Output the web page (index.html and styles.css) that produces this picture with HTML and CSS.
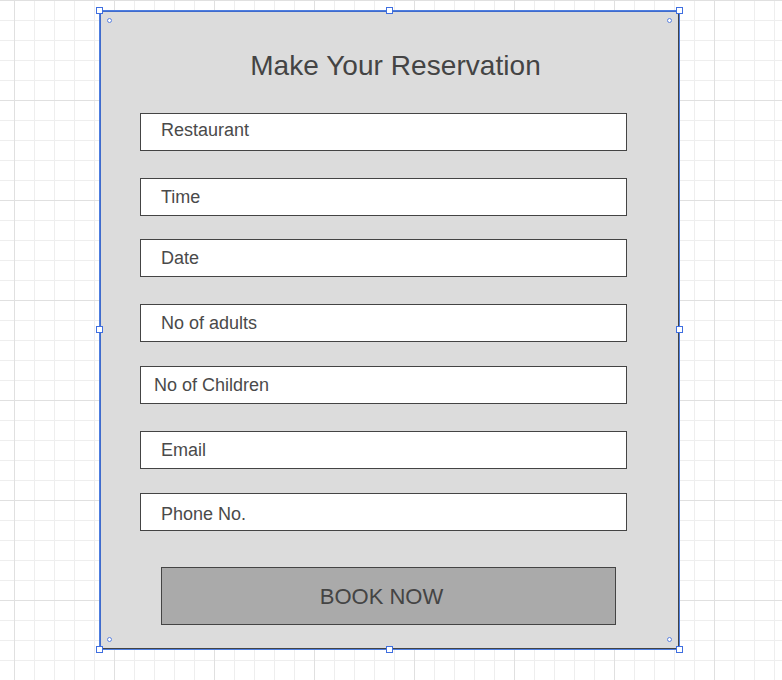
FILE: index.html
```html
<!DOCTYPE html>
<html lang="en">
<head>
<meta charset="utf-8">
<title>Make Your Reservation</title>
<link rel="stylesheet" href="styles.css">
</head>
<body>
<div class="stage">
  <div class="selection">
    <form class="panel">
      <h1 class="title">Make Your Reservation</h1>
      <div class="field field-first field-high">Restaurant</div>
      <div class="field gap-27">Time</div>
      <div class="field gap-23">Date</div>
      <div class="field gap-27">No of adults</div>
      <div class="field gap-24 field-tight">No of Children</div>
      <div class="field gap-27">Email</div>
      <div class="field gap-24 field-low">Phone No.</div>
      <div class="button">BOOK NOW</div>
      <span class="dot dot-tl"></span>
      <span class="dot dot-tr"></span>
      <span class="dot dot-bl"></span>
      <span class="dot dot-br"></span>
    </form>
    <span class="handle h-tl"></span>
    <span class="handle h-tm"></span>
    <span class="handle h-tr"></span>
    <span class="handle h-ml"></span>
    <span class="handle h-mr"></span>
    <span class="handle h-bl"></span>
    <span class="handle h-bm"></span>
    <span class="handle h-br"></span>
  </div>
</div>
</body>
</html>
```
FILE: styles.css
```css
html, body {
  margin: 0;
  padding: 0;
}
body {
  width: 782px;
  height: 680px;
  overflow: hidden;
  font-family: "Liberation Sans", Arial, sans-serif;
  background-color: #ffffff;
  background-image:
    linear-gradient(to right, #e0e0e0 1px, transparent 1px),
    linear-gradient(to bottom, #e0e0e0 1px, transparent 1px),
    linear-gradient(to right, #eeeeee 1px, transparent 1px),
    linear-gradient(to bottom, #eeeeee 1px, transparent 1px);
  background-size: 100px 100px, 100px 100px, 20px 20px, 20px 20px;
  background-position: 14px 0, 0 0, 14px 0, 0 0;
}
.stage {
  padding: 10px 0 0 99px;
}
.selection {
  position: relative;
  box-sizing: border-box;
  width: 581px;
  height: 640px;
  border: 1px solid #4d7de0;
}
.panel {
  position: relative;
  box-sizing: border-box;
  width: 579px;
  height: 638px;
  margin: 0;
  background: #dcdcdc;
  border-top: 1px solid #3f6bcc;
  border-left: 1px solid #3f6bcc;
  border-right: 1px solid #444444;
  border-bottom: 1px solid #444444;
  display: flex;
  flex-direction: column;
  align-items: flex-start;
}
.title {
  margin: 38px 0 0 0;
  width: 100%;
  box-sizing: border-box;
  padding-left: 12px;
  text-align: center;
  font-size: 28px;
  letter-spacing: 0.05px;
  line-height: 32px;
  font-weight: normal;
  color: #444444;
}
.field {
  box-sizing: border-box;
  width: 487px;
  height: 38px;
  margin-left: 39px;
  border: 1px solid #444444;
  background: #ffffff;
  padding: 8px 0 0 20px;
  font-size: 18px;
  line-height: 20px;
  color: #4a4a4a;
}
.field-first { margin-top: 31px; }
.field-high { padding-top: 6px; }
.field-low { padding-top: 10px; }
.field-tight { padding-left: 13px; }
.gap-23 { margin-top: 23px; }
.gap-24 { margin-top: 24px; }
.gap-27 { margin-top: 27px; }
.button {
  box-sizing: border-box;
  width: 455px;
  height: 58px;
  margin: 36px 0 0 60px;
  background: #aaaaaa;
  border: 1px solid #444444;
  display: flex;
  align-items: center;
  justify-content: center;
  padding: 2px 14px 0 0;
  font-size: 22px;
  color: #444444;
}
.dot {
  position: absolute;
  width: 5px;
  height: 5px;
  box-sizing: border-box;
  border: 1.5px solid #5b82e0;
  border-radius: 50%;
  background: #ffffff;
}
.dot-tl { left: 6px; top: 6px; }
.dot-tr { right: 6px; top: 6px; }
.dot-bl { left: 6px; bottom: 6px; }
.dot-br { right: 6px; bottom: 6px; }
.handle {
  position: absolute;
  width: 7px;
  height: 7px;
  box-sizing: border-box;
  border: 1px solid #3f6fe0;
  background: #ffffff;
}
.h-tl { left: -4px; top: -4px; }
.h-tm { left: 286px; top: -4px; }
.h-tr { right: -4px; top: -4px; }
.h-ml { left: -4px; top: 315px; }
.h-mr { right: -4px; top: 315px; }
.h-bl { left: -4px; bottom: -4px; }
.h-bm { left: 286px; bottom: -4px; }
.h-br { right: -4px; bottom: -4px; }
```
